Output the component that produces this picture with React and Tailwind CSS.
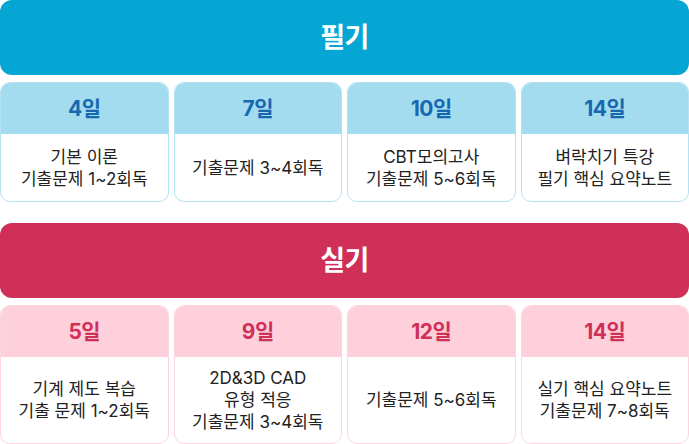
import React from "react";

const sections = [
  {
    title: "필기",
    head: "bg-[#05a6d3]",
    band: "bg-[#a3dcef]",
    day: "text-[#1768b0]",
    border: "border-[#b3e2f2]",
    cardH: "h-[120px]",
    items: [
      { d: "4일", t: ["기본 이론", "기출문제 1~2회독"] },
      { d: "7일", t: ["기출문제 3~4회독"] },
      { d: "10일", t: ["CBT모의고사", "기출문제 5~6회독"] },
      { d: "14일", t: ["벼락치기 특강", "필기 핵심 요약노트"] },
    ],
  },
  {
    title: "실기",
    head: "bg-[#d03058]",
    band: "bg-[#fdd0dc]",
    day: "text-[#d03058]",
    border: "border-[#fbd6e0]",
    cardH: "h-[139px]",
    items: [
      { d: "5일", t: ["기계 제도 복습", "기출 문제 1~2회독"] },
      { d: "9일", t: ["2D&3D CAD", "유형 적응", "기출문제 3~4회독"] },
      { d: "12일", t: ["기출문제 5~6회독"] },
      { d: "14일", t: ["실기 핵심 요약노트", "기출문제 7~8회독"] },
    ],
  },
];

export default function App() {
  return (
    <div
      className="w-[689px] h-[444px] bg-white flex flex-col gap-[21px]"
      style={{ fontFamily: 'Inter, "Noto Sans CJK KR", "Noto Sans", sans-serif' }}
    >
      {sections.map((s) => (
        <div key={s.title} className="flex flex-col gap-[7px]">
          <div
            className={`${s.head} h-[75px] rounded-[12px] flex items-center justify-center text-white text-[27px] leading-[32px] font-bold tracking-[-0.5px]`}
          >
            {s.title}
          </div>
          <div className="grid grid-cols-4 gap-[5px]">
            {s.items.map((it, i) => (
              <div
                key={i}
                className={`${s.cardH} rounded-[10px] border ${s.border} overflow-hidden flex flex-col bg-white`}
              >
                <div
                  className={`${s.band} h-[51px] shrink-0 flex items-center justify-center text-[21px] leading-[26px] font-bold ${s.day} tracking-[-0.5px]`}
                >
                  {it.d}
                </div>
                <div className="flex-1 flex flex-col items-center justify-center text-[17px] leading-[22px] text-[#222] tracking-normal">
                  {it.t.map((l, j) => (
                    <div key={j}>{l}</div>
                  ))}
                </div>
              </div>
            ))}
          </div>
        </div>
      ))}
    </div>
  );
}
